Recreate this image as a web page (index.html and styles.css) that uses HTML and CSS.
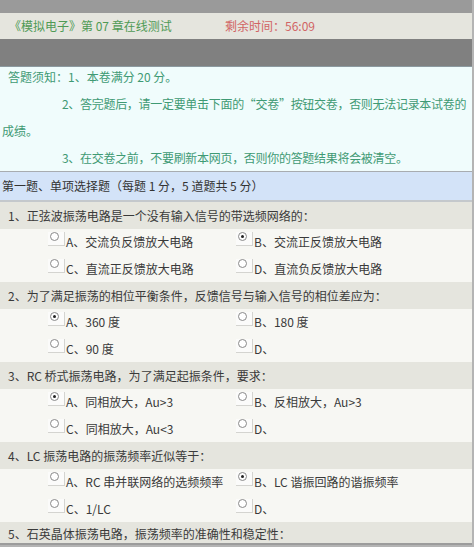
FILE: index.html
```html
<!DOCTYPE html>
<html lang="zh">
<head>
<meta charset="utf-8">
<title>在线测试</title>
<link rel="stylesheet" href="styles.css">
</head>
<body>
<div class="page">
  <div class="topbar"></div>
  <div class="titlebar">
    <span class="title">《模拟电子》第 07 章在线测试</span>
    <span class="timer">剩余时间：56:09</span>
  </div>
  <div class="darkbar"></div>
  <div class="notice">
    <p class="first">答题须知：1、本卷满分 20 分。</p>
    <p class="indent">2、答完题后，请一定要单击下面的“交卷”按钮交卷，否则无法记录本试卷的</p>
    <p class="out">成绩。</p>
    <p class="indent">3、在交卷之前，不要刷新本网页，否则你的答题结果将会被清空。</p>
  </div>
  <div class="section">第一题、单项选择题（每题 1 分，5 道题共 5 分）</div>

  <div class="question">1、正弦波振荡电路是一个没有输入信号的带选频网络的：</div>
  <div class="options">
    <div class="opt"><span class="rb"><span class="radio"></span></span>A、交流负反馈放大电路</div>
    <div class="opt"><span class="rb"><span class="radio checked"></span></span>B、交流正反馈放大电路</div>
    <div class="opt"><span class="rb"><span class="radio"></span></span>C、直流正反馈放大电路</div>
    <div class="opt"><span class="rb"><span class="radio"></span></span>D、直流负反馈放大电路</div>
  </div>

  <div class="question">2、为了满足振荡的相位平衡条件，反馈信号与输入信号的相位差应为：</div>
  <div class="options">
    <div class="opt"><span class="rb"><span class="radio checked"></span></span>A、360 度</div>
    <div class="opt"><span class="rb"><span class="radio"></span></span>B、180 度</div>
    <div class="opt"><span class="rb"><span class="radio"></span></span>C、90 度</div>
    <div class="opt"><span class="rb"><span class="radio"></span></span>D、</div>
  </div>

  <div class="question">3、RC 桥式振荡电路，为了满足起振条件，要求：</div>
  <div class="options">
    <div class="opt"><span class="rb"><span class="radio checked"></span></span>A、同相放大，Au&gt;3</div>
    <div class="opt"><span class="rb"><span class="radio"></span></span>B、反相放大，Au&gt;3</div>
    <div class="opt"><span class="rb"><span class="radio"></span></span>C、同相放大，Au&lt;3</div>
    <div class="opt"><span class="rb"><span class="radio"></span></span>D、</div>
  </div>

  <div class="question">4、LC 振荡电路的振荡频率近似等于：</div>
  <div class="options">
    <div class="opt"><span class="rb"><span class="radio"></span></span>A、RC 串并联网络的选频频率</div>
    <div class="opt"><span class="rb"><span class="radio checked"></span></span>B、LC 谐振回路的谐振频率</div>
    <div class="opt"><span class="rb"><span class="radio"></span></span>C、1/LC</div>
    <div class="opt"><span class="rb"><span class="radio"></span></span>D、</div>
  </div>

  <div class="question last">5、石英晶体振荡电路，振荡频率的准确性和稳定性：</div>
</div>
</body>
</html>
```
FILE: styles.css
```css
html, body {
  margin: 0;
  padding: 0;
}
body {
  background: #b4b4b4;
  width: 474px;
  height: 547px;
  overflow: hidden;
  font-family: "Noto Sans CJK SC", "DejaVu Sans", sans-serif;
  font-size: 12px;
  line-height: 16px;
  color: #3a3a3a;
}
.page {
  width: 472px;
  background: #f7f7f3;
}
.topbar {
  height: 13px;
  background: #9a9a9a;
}
.titlebar {
  height: 26px;
  background: #e5e5de;
  display: flex;
  align-items: center;
  padding-left: 9px;
  font-size: 12px;
}
.title {
  color: #4f9a55;
  width: 216px;
}
.timer {
  color: #d16464;
}
.darkbar {
  height: 27px;
  background: #808080;
  border-bottom: 1px solid #8c9aa0;
}
.notice {
  background: #f0fcfc;
  color: #3f9a74;
  padding: 0;
  border-bottom: 1px solid #a8acb0;
}
.notice p {
  margin: 0;
  height: 27px;
  line-height: 27px;
  white-space: nowrap;
  overflow: hidden;
}
.notice .first {
  padding-left: 8px;
  height: 23px;
  line-height: 19px;
}
.notice .indent {
  padding-left: 62px;
  letter-spacing: -0.3px;
}
.notice .out {
  padding-left: 2px;
}
.section {
  background: #d3e3f8;
  height: 28px;
  line-height: 28px;
  padding-left: 2px;
  color: #333;
  border-bottom: 2px solid #c4c8cc;
}
.question {
  background: #e5e5de;
  height: 27px;
  line-height: 27px;
  padding-left: 8px;
  color: #3a3a3a;
  white-space: nowrap;
}
.question.last {
  height: 21px;
  line-height: 23px;
  border-bottom: 2px solid #9c9c9c;
}
.options {
  display: grid;
  grid-template-columns: 188px auto;
  grid-auto-rows: 26.5px;
  padding: 0 0 0 48px;
  background: #f7f7f3;
}
.opt {
  height: 26.5px;
  display: flex;
  align-items: center;
  color: #3a3a3a;
  white-space: nowrap;
}
.rb {
  display: inline-block;
  flex: none;
  width: 16px;
  height: 13px;
  margin-right: 1px;
  border-right: 1px solid #d4d4d0;
  border-bottom: 1px solid #d4d4d0;
  background: #fbfbfa;
  position: relative;
  top: -3px;
}
.radio {
  position: absolute;
  left: 2px;
  top: 0;
  width: 9px;
  height: 9px;
  border-radius: 50%;
  box-sizing: border-box;
  border: 1px solid #8a8a8a;
  background: #fff;
}
.radio.checked::after {
  content: "";
  position: absolute;
  left: 2px;
  top: 2px;
  width: 3px;
  height: 3px;
  border-radius: 50%;
  background: #222;
}
```
